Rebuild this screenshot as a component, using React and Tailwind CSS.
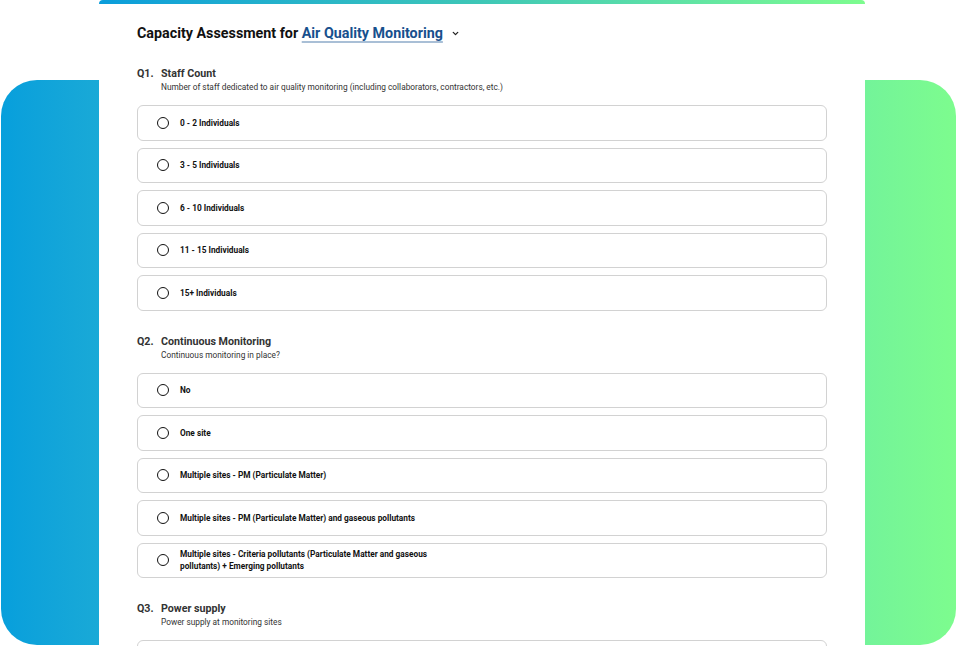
import React from 'react'

const questions = [
  {
    num: 'Q1.',
    title: 'Staff Count',
    desc: 'Number of staff dedicated to air quality monitoring (including collaborators, contractors, etc.)',
    options: ['0 - 2 Individuals', '3 - 5 Individuals', '6 - 10 Individuals', '11 - 15 Individuals', '15+ Individuals'],
  },
  {
    num: 'Q2.',
    title: 'Continuous Monitoring',
    desc: 'Continuous monitoring in place?',
    options: [
      'No',
      'One site',
      'Multiple sites - PM (Particulate Matter)',
      'Multiple sites - PM (Particulate Matter) and gaseous pollutants',
      'Multiple sites - Criteria pollutants (Particulate Matter and gaseous pollutants) + Emerging pollutants',
    ],
  },
  {
    num: 'Q3.',
    title: 'Power supply',
    desc: 'Power supply at monitoring sites',
    options: ['Grid power', 'Solar power'],
  },
]

const Option = ({ label }) => (
  <label className="flex items-center gap-[11px] min-h-[35.5px] px-[19px] py-[4px] border border-[#d2d2d2] rounded-[6px] bg-white cursor-pointer">
    <span className="shrink-0 w-[12px] h-[12px] rounded-full border-[1.5px] border-[#111]" />
    <span className="max-w-[280px] text-[8.3px] leading-[12px] font-bold text-[#111]">{label}</span>
  </label>
)

const Question = ({ q }) => (
  <div className="mt-[24px]">
    <div className="flex text-[10.7px] font-bold text-[#333] leading-[14px]">
      <span className="w-[24px]">{q.num}</span>
      <span>{q.title}</span>
    </div>
    <p className="pl-[24px] text-[8.3px] leading-[12px] text-[#333]">{q.desc}</p>
    <div className="mt-[12px] flex flex-col gap-[7px]">
      {q.options.map((o) => (
        <Option key={o} label={o} />
      ))}
    </div>
  </div>
)

export default function App() {
  return (
    <div className="relative h-[646px] w-[956px] overflow-hidden bg-white font-['Roboto',sans-serif]">
      {/* decorative gradient backdrop */}
      <div className="absolute left-[1px] right-0 top-[80px] bottom-[1px] rounded-[36px] bg-gradient-to-r from-[#079fdc] to-[#7dfc8e]" />

      <div className="relative ml-[99px] w-[766px] h-full bg-white rounded-t-[6px]">
        <div className="h-[4px] rounded-t-[6px] bg-gradient-to-r from-[#0a9ddb] via-[#3ec7b6] to-[#7dfc8e]" />
        <div className="px-[38px] pt-[19px]">
          <h1 className="flex items-center text-[14.3px] font-bold text-[#111] leading-[20px]">
            Capacity Assessment for&nbsp;
            <span className="text-[#17508d] underline decoration-[#a9bfd6] decoration-2 underline-offset-[3px]">
              Air Quality Monitoring
            </span>
            <svg className="ml-[8px]" width="9" height="9" viewBox="0 0 24 24" fill="none" stroke="#222" strokeWidth="3.5" strokeLinecap="round" strokeLinejoin="round">
              <path d="M6 9l6 6 6-6" />
            </svg>
          </h1>
          <div>
            {questions.map((q) => (
              <Question key={q.num} q={q} />
            ))}
          </div>
        </div>
      </div>
    </div>
  )
}
